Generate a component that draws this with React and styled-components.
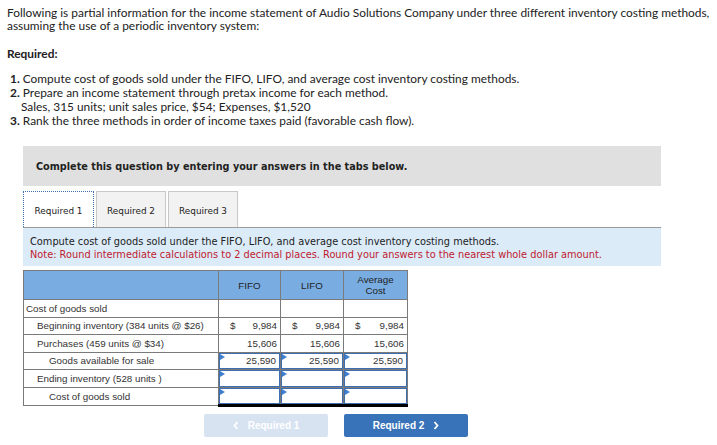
import React from "react";
import styled, { createGlobalStyle } from "styled-components";

const Global = createGlobalStyle`
  html, body { margin: 0; padding: 0; background: #fff; }
  body { font-family: Lato, "Open Sans", sans-serif; color: #222; }
`;

const Page = styled.div`
  padding: 6px 7px 0 7px;
  width: 717px;
  box-sizing: border-box;
`;

const Intro = styled.p`
  margin: 0;
  font-size: 11.9px;
  line-height: 13px;
`;

const ReqTitle = styled.div`
  margin-top: 15px;
  font-size: 11.9px;
  font-weight: 700;
  line-height: 13px;
`;

const List = styled.div`
  margin-top: 12px;
  font-size: 11.9px;
  line-height: 14px;
`;

const Item = styled.div`
  padding-left: ${(p) => (p.$indent ? "14px" : "3px")};
  b { font-weight: 700; }
`;

const Section = styled.div`
  margin: 18px 0 0 16px;
  width: 638px;
  font-family: "DejaVu Sans", Verdana, sans-serif;
`;

const Banner = styled.div`
  background: #e0e0e0;
  height: 40px;
  display: flex;
  align-items: center;
  padding-left: 13px;
  font-size: 9.7px;
  font-weight: 700;
  color: #222;
`;

const Tabs = styled.div`
  display: flex;
  gap: 2px;
  margin-top: 5px;
  height: 36px;
  align-items: flex-end;
`;

const Tab = styled.div`
  height: 36px;
  box-sizing: border-box;
  width: ${(p) => p.$w}px;
  display: flex;
  align-items: center;
  justify-content: center;
  padding-top: 2px;
  font-size: 8.9px;
  color: #222;
  background: ${(p) => (p.$active ? "#fff" : "#f2f2f2")};
  border: 1px ${(p) => (p.$active ? "dotted #3b6fb0" : "solid #c8c8c8")};
  border-bottom: none;
`;

const Info = styled.div`
  background: #dbebf8;
  border-top: 1px solid #9a9a9a;
  height: 39px;
  padding: 8px 0 0 7px;
  box-sizing: border-box;
  font-size: 9.8px;
  line-height: 12.5px;
  color: #222;
`;

const Note = styled.div`
  color: #c0202e;
`;

const Table = styled.table`
  margin-top: 4px;
  border-collapse: collapse;
  font-family: "Liberation Sans", Arial, sans-serif;
  font-size: 9.8px;
  color: #333;
  table-layout: fixed;
`;

const Th = styled.th`
  background: #79ade2;
  border: 1px solid #7a7a7a;
  height: 28px;
  padding: 0;
  font-weight: 400;
  color: #222;
  line-height: 11px;
  width: ${(p) => p.$w}px;
  text-align: center;
`;

const Label = styled.td`
  border: 1px solid #7a7a7a;
  height: 16.5px;
  padding: 0 0 0 ${(p) => p.$pad}px;
  white-space: nowrap;
  color: #333;
`;

const Cell = styled.td`
  border: 1px solid #7a7a7a;
  ${(p) => p.$last && "border-bottom: 3px solid #000;"}
  height: 16.5px;
  padding: 0;
  position: relative;
`;

const Val = styled.div`
  display: flex;
  justify-content: space-between;
  padding: 0 3px 0 11px;
`;

const InputBox = styled.div`
  position: absolute;
  inset: 0;
  border: 1.5px solid #3f6fb0;
  display: flex;
  align-items: center;
  justify-content: flex-end;
  padding-right: 3px;
  &::before {
    content: "";
    position: absolute;
    left: 0;
    top: 0;
    border-left: 5px solid #3f7fd0;
    border-top: 3px solid transparent;
    border-bottom: 3px solid transparent;
  }
`;

const Nav = styled.div`
  display: flex;
  gap: 16px;
  margin: 7px 0 0 181px;
`;

const NavBtn = styled.div`
  width: 124px;
  height: 23px;
  border-radius: 2px;
  display: flex;
  align-items: center;
  justify-content: center;
  gap: 9px;
  font-family: "Liberation Sans", Arial, sans-serif;
  font-size: 10px;
  font-weight: 700;
  color: #fff;
  background: ${(p) => (p.$disabled ? "#d7e3f1" : "#3873b9")};
  svg { display: block; }
`;

const Chevron = ({ dir }) => (
  <svg width="6" height="9" viewBox="0 0 6 9">
    <path
      d={dir === "left" ? "M4.5 1 L1.5 4.5 L4.5 8" : "M1.5 1 L4.5 4.5 L1.5 8"}
      stroke="#fff"
      strokeWidth="1.8"
      fill="none"
    />
  </svg>
);

const rows = [
  { label: "Cost of goods sold", pad: 2, vals: null },
  { label: "Beginning inventory (384 units @ $26)", pad: 13, vals: ["9,984", "9,984", "9,984"], dollar: true },
  { label: "Purchases (459 units @ $34)", pad: 13, vals: ["15,606", "15,606", "15,606"] },
  { label: "Goods available for sale", pad: 25, input: ["25,590", "25,590", "25,590"] },
  { label: "Ending inventory (528 units )", pad: 13, input: ["", "", ""] },
  { label: "Cost of goods sold", pad: 25, input: ["", "", ""], last: true },
];

export default function App() {
  return (
    <Page>
      <Global />
      <Intro>
        Following is partial information for the income statement of Audio Solutions Company under three different inventory costing methods,
        assuming the use of a periodic inventory system:
      </Intro>
      <ReqTitle>Required:</ReqTitle>
      <List>
        <Item><b>1.</b> Compute cost of goods sold under the FIFO, LIFO, and average cost inventory costing methods.</Item>
        <Item><b>2.</b> Prepare an income statement through pretax income for each method.</Item>
        <Item $indent>Sales, 315 units; unit sales price, $54; Expenses, $1,520</Item>
        <Item><b>3.</b> Rank the three methods in order of income taxes paid (favorable cash flow).</Item>
      </List>
      <Section>
        <Banner>Complete this question by entering your answers in the tabs below.</Banner>
        <Tabs>
          <Tab $active $w={71}>Required 1</Tab>
          <Tab $w={70}>Required 2</Tab>
          <Tab $w={70}>Required 3</Tab>
        </Tabs>
        <Info>
          <div>Compute cost of goods sold under the FIFO, LIFO, and average cost inventory costing methods.</div>
          <Note>Note: Round intermediate calculations to 2 decimal places. Round your answers to the nearest whole dollar amount.</Note>
        </Info>
        <Table>
          <thead>
            <tr>
              <Th $w={194}></Th>
              <Th $w={61}>FIFO</Th>
              <Th $w={62}>LIFO</Th>
              <Th $w={63}>Average<br />Cost</Th>
            </tr>
          </thead>
          <tbody>
            {rows.map((r, i) => (
              <tr key={i}>
                <Label $pad={r.pad}>{r.label}</Label>
                {[0, 1, 2].map((c) => (
                  <Cell key={c} $last={r.last}>
                    {r.vals && (
                      <Val>
                        <span>{r.dollar ? "$" : ""}</span>
                        <span>{r.vals[c]}</span>
                      </Val>
                    )}
                    {r.input && <InputBox>{r.input[c]}</InputBox>}
                  </Cell>
                ))}
              </tr>
            ))}
          </tbody>
        </Table>
        <Nav>
          <NavBtn $disabled><Chevron dir="left" />Required 1</NavBtn>
          <NavBtn>Required 2<Chevron dir="right" /></NavBtn>
        </Nav>
      </Section>
    </Page>
  );
}
